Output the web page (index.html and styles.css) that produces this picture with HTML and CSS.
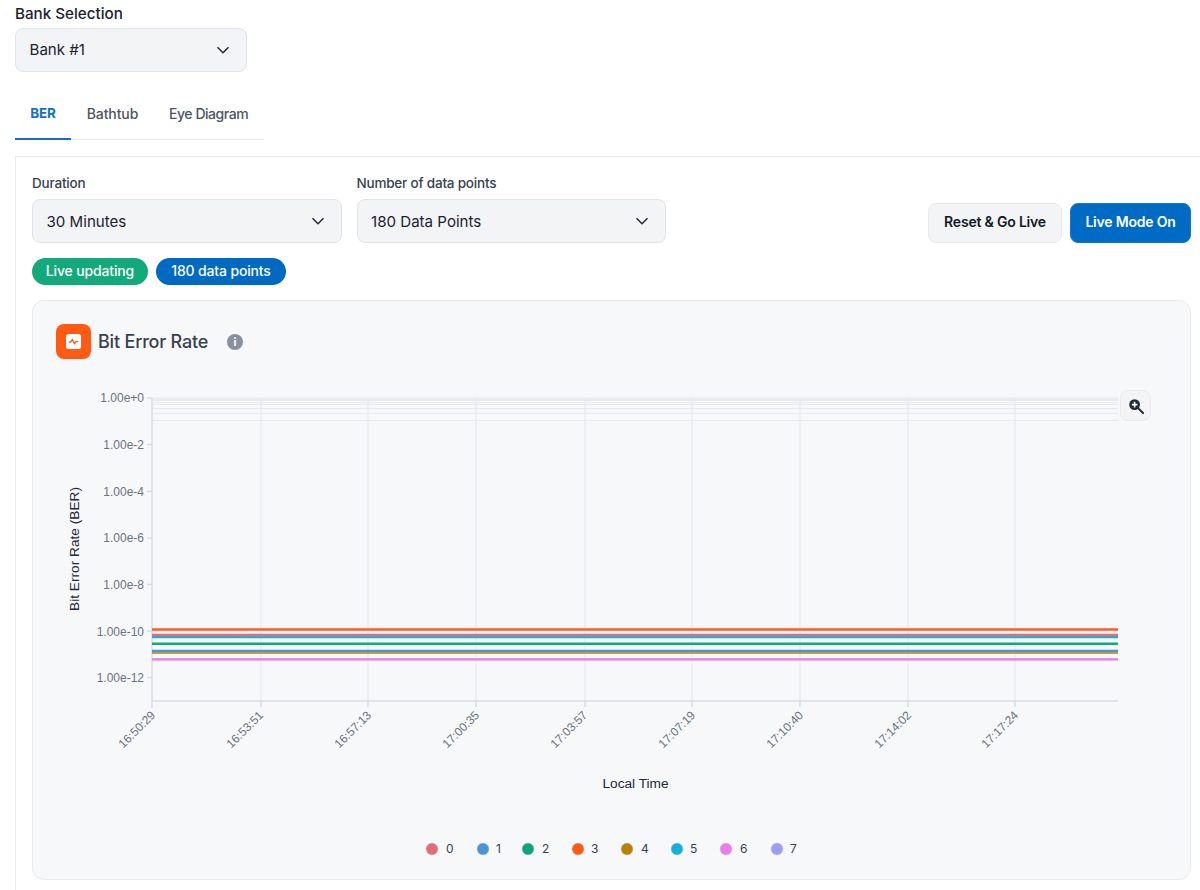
FILE: index.html
```html
<!DOCTYPE html>
<html lang="en">
<head>
<meta charset="utf-8">
<title>Bit Error Rate</title>
<link rel="stylesheet" href="styles.css">
</head>
<body>
<div class="page">
  <label class="bank-label">Bank Selection</label>
  <div class="select bank-select"><span>Bank #1</span>
    <svg class="chev" viewBox="0 0 14 8"><path d="M1.5 1.2 7 6.7l5.5-5.5"/></svg></div>
  <nav class="tabs">
    <a class="tab active">BER</a>
    <a class="tab">Bathtub</a>
    <a class="tab">Eye Diagram</a>
  </nav>
  <section class="panel">
    <div class="controls">
      <div class="field">
        <label class="field-label">Duration</label>
        <div class="select"><span>30 Minutes</span>
          <svg class="chev" viewBox="0 0 14 8"><path d="M1.5 1.2 7 6.7l5.5-5.5"/></svg></div>
      </div>
      <div class="field">
        <label class="field-label">Number of data points</label>
        <div class="select"><span>180 Data Points</span>
          <svg class="chev" viewBox="0 0 14 8"><path d="M1.5 1.2 7 6.7l5.5-5.5"/></svg></div>
      </div>
      <div class="actions">
        <button class="btn btn-light">Reset &amp; Go Live</button>
        <button class="btn btn-primary">Live Mode On</button>
      </div>
    </div>
    <div class="chips">
      <span class="chip chip-green">Live updating</span>
      <span class="chip chip-blue">180 data points</span>
    </div>
    <div class="card">
      <header class="card-head">
        <span class="card-icon">
          <svg viewBox="0 0 15 15" width="15" height="15"><rect width="15" height="15" rx="2.5" fill="#fff"/><path d="M2.8 8h2.2l1.4-2.6 2 4.4 1.3-2.2h2.6" fill="none" stroke="#ff5a14" stroke-width="1.3" stroke-linejoin="round"/></svg>
        </span>
        <h2 class="card-title">Bit Error Rate</h2>
        <span class="info">i</span>
      </header>
      <div class="chart">
        <svg class="plot" viewBox="56 375 1111 490" width="1111" height="490">
          <g class="grid-minor">
            <path d="M152 399.5H1118M152 400.5H1118M152 402.5H1118M152 404.5H1118M152 408.5H1118M152 413.5H1118M152 420.5H1118"/>
          </g>
          <g class="grid">
            <path d="M152 398H1118M261 398V701M368 398V701M476 398V701M585 398V701M692 398V701M800 398V701M908 398V701M1015 398V701"/>
          </g>
          <g class="axis">
            <path d="M152 398V708M147 398H152M147 444.5H152M147 491.5H152M147 538H152M147 584.5H152M147 631H152M147 677.5H152M152 701H1118M261 701V707M368 701V707M476 701V707M585 701V707M692 701V707M800 701V707M908 701V707M1015 701V707"/>
          </g>
          <g class="ticks-y">
            <text x="144" y="402">1.00e+0</text>
            <text x="144" y="448.5">1.00e-2</text>
            <text x="144" y="495.5">1.00e-4</text>
            <text x="144" y="542">1.00e-6</text>
            <text x="144" y="588.5">1.00e-8</text>
            <text x="144" y="635.5">1.00e-10</text>
            <text x="144" y="681.5">1.00e-12</text>
          </g>
          <g class="ticks-x">
            <text transform="translate(156 716) rotate(-45)">16:50:29</text>
            <text transform="translate(264 716) rotate(-45)">16:53:51</text>
            <text transform="translate(372 716) rotate(-45)">16:57:13</text>
            <text transform="translate(480 716) rotate(-45)">17:00:35</text>
            <text transform="translate(588 716) rotate(-45)">17:03:57</text>
            <text transform="translate(696 716) rotate(-45)">17:07:19</text>
            <text transform="translate(804 716) rotate(-45)">17:10:40</text>
            <text transform="translate(912 716) rotate(-45)">17:14:02</text>
            <text transform="translate(1019 716) rotate(-45)">17:17:24</text>
          </g>
          <text class="axis-name" x="635.5" y="788" text-anchor="middle">Local Time</text>
          <text class="axis-name" transform="translate(79 549) rotate(-90)" text-anchor="middle">Bit Error Rate (BER)</text>
          <g class="series">
            <path stroke="#ff5a1f" d="M152 629.5H1118"/>
            <path stroke="#12b5d8" d="M152 637H1118"/>
            <path stroke="#e46c74" d="M152 635H1118"/>
            <path class="overlay" stroke="#7d93d8" d="M249 636H1022"/>
            <path stroke="#12a97b" d="M152 643.7H1118"/>
            <path stroke="#4a93d9" d="M152 651H1118"/>
            <path class="thin" stroke="#b98105" d="M152 653H1118"/>
            <path stroke="#e878e8" d="M152 659.4H1118"/>
          </g>
          <g class="legend">
            <circle cx="432" cy="849" r="6" fill="#e46c74"/><text x="446" y="853">0</text>
            <circle cx="483" cy="849" r="6" fill="#4a93d9"/><text x="496" y="853">1</text>
            <circle cx="528" cy="849" r="6" fill="#0ea47a"/><text x="542" y="853">2</text>
            <circle cx="578" cy="849" r="6" fill="#ff5a14"/><text x="591" y="853">3</text>
            <circle cx="627" cy="849" r="6" fill="#b98105"/><text x="641" y="853">4</text>
            <circle cx="677" cy="849" r="6" fill="#12b0da"/><text x="690" y="853">5</text>
            <circle cx="726" cy="849" r="6" fill="#ec7ce8"/><text x="740" y="853">6</text>
            <circle cx="777" cy="849" r="6" fill="#9a9ff5"/><text x="790" y="853">7</text>
          </g>
        </svg>
        <button class="zoom" aria-label="Zoom">
          <svg viewBox="0 0 16 16" width="16" height="16"><circle cx="6.6" cy="6.6" r="5.4" fill="#1f2937"/><path d="M10.6 10.6 15 15" stroke="#1f2937" stroke-width="2" stroke-linecap="round"/><path d="M6.6 3.8v5.6M3.8 6.6h5.6" stroke="#fff" stroke-width="1.6"/></svg>
        </button>
      </div>
    </div>
  </section>
</div>
</body>
</html>
```
FILE: styles.css
```css
* { box-sizing: border-box; }
html, body { margin: 0; padding: 0; background: #fff; }
body { font-family: Inter, "Noto Sans", sans-serif; color: #111827; }
.page { width: 1200px; height: 890px; overflow: hidden; padding: 5px 0 0 15px; }
.bank-label { display: block; height: 23px; font-size: 15.2px; line-height: 18px; font-weight: 500; color: #1a2230; }
.select { display: flex; align-items: center; justify-content: space-between; height: 44px; padding: 0 16px 1px 13.5px; background: #f3f4f6; border: 1px solid #e1e3e8; border-radius: 8px; font-size: 15.1px; color: #1a2230; }
.field .select { padding-bottom: 0; }
.bank-select { width: 232px; }
.chev { width: 14px; height: 8px; fill: none; stroke: #1f2937; stroke-width: 1.5; }
.tabs { display: flex; width: 249px; height: 48px; margin-top: 20px; border-bottom: 1px solid #e8eaed; }
.tab { display: flex; align-items: center; justify-content: center; height: 48px; padding: 0 0 6px; font-size: 14px; letter-spacing: -0.1px; color: #4b5563; font-weight: 500; }
.tab.active { width: 56px; padding-bottom: 4px; color: #1470c8; font-weight: 700; font-size: 13.5px; border-bottom: 2px solid #0f6fc9; }
.tab:nth-child(2) { width: 83px; }
.tab:nth-child(3) { padding-left: 15px; letter-spacing: -0.45px; white-space: nowrap; }
.panel { margin-top: 16px; height: 740px; padding: 16px 9px 0 16px; border-top: 1px solid #e8eaed; border-left: 1px solid #e8eaed; }
.controls { display: flex; align-items: flex-end; gap: 15px; }
.field { width: 309.5px; }
.field-label { display: block; height: 26px; padding-top: 2px; font-size: 13.5px; line-height: 16px; font-weight: 500; letter-spacing: -0.2px; color: #374151; }
.actions { display: flex; gap: 8px; margin-left: auto; }
.btn { height: 40px; padding: 0 0 3px; border-radius: 8px; font-family: inherit; font-size: 14px; font-weight: 600; letter-spacing: -0.2px; }
.btn-light { width: 134px; background: #f3f4f6; border: 1px solid #e8eaed; color: #111827; }
.btn-primary { width: 121px; background: #006bc4; border: 1px solid #1476cc; color: #fff; }
.chips { display: flex; gap: 8px; margin-top: 15px; }
.chip { display: flex; align-items: center; justify-content: center; height: 27px; padding-bottom: 2px; border-radius: 14px; font-size: 14px; font-weight: 500; letter-spacing: -0.15px; color: #fff; }
.chip-green { width: 116px; background: #12a97b; }
.chip-blue { width: 130px; background: #0069c2; }
.card { margin-top: 15px; height: 580px; padding: 23px 23px 0; background: #f7f8fa; border: 1px solid #e8eaed; border-radius: 12px; }
.card-head { display: flex; align-items: center; height: 35px; }
.card-icon { display: flex; align-items: center; justify-content: center; width: 35px; height: 35px; background: #ff5a14; border-radius: 8px; }
.card-title { margin: 0 0 0 7px; font-size: 18px; font-weight: 500; letter-spacing: -0.2px; color: #374151; }
.info { display: flex; align-items: center; justify-content: center; width: 16px; height: 16px; margin-left: 19px; background: #8a919e; border-radius: 50%; color: #fff; font-size: 11px; font-weight: 700; }
.chart { position: relative; margin-top: 16px; }
.plot { display: block; }
.plot text { font-family: "Liberation Sans", Arial, sans-serif; }
.grid-minor path { fill: none; stroke: #e7e9ed; stroke-width: 1; }
.grid path { fill: none; stroke: #e4e6ea; stroke-width: 1; }
.axis path { fill: none; stroke: #d9dce1; stroke-width: 1.5; }
.ticks-y text { font-size: 12px; fill: #6b7280; text-anchor: end; }
.ticks-x text { font-size: 11.9px; fill: #6b7280; text-anchor: end; }
.axis-name { font-size: 13.7px; fill: #1f2937; }
.series path { fill: none; stroke-width: 2.4; }
.series .thin { stroke-width: 1.6; }
.series .overlay { stroke-width: 1.4; opacity: 0.6; }
.legend circle { stroke: #c9cdd3; stroke-width: 0.5; }
.legend text { font-family: Inter, sans-serif; font-size: 12px; fill: #374151; }
.zoom { position: absolute; top: 15px; right: 16px; display: flex; align-items: center; justify-content: center; width: 31px; height: 31px; padding: 0; background: #f3f4f6; border: 1px solid #e8eaed; border-radius: 8px; }
```
